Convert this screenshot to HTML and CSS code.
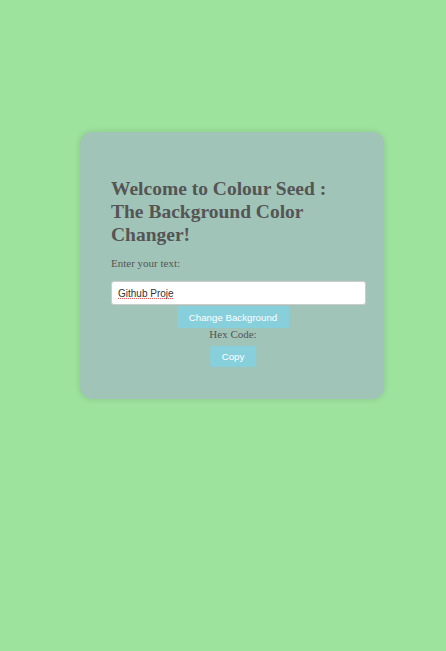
FILE: index.html
```html
<!DOCTYPE html>
<html>
<head>
<meta charset="utf-8">
<link rel="stylesheet" href="styles.css">
</head>
<body>
<div class="card">
  <h1 class="title">Welcome to Colour Seed : The Background Color Changer!</h1>
  <p class="label">Enter your text:</p>
  <input class="text-input" type="text" value="Github Proje" spellcheck="false">
  <div class="actions">
    <button class="btn">Change Background</button>
    <div class="hex">Hex Code:</div>
    <button class="btn btn-copy">Copy</button>
  </div>
</div>
</body>
</html>
```
FILE: styles.css
```css
html, body {
  margin: 0;
  padding: 0;
}
body {
  background: #9de29d;
  min-height: 651px;
  font-family: "Liberation Serif", serif;
  color: #555;
  padding-top: 132px;
  box-sizing: border-box;
}
.card {
  width: 304px;
  box-sizing: border-box;
  margin-left: 80px;
  background: #a0c4b8;
  border-radius: 12px;
  padding: 32px 18px 32px 31px;
  box-shadow: 0 0 6px rgba(0,0,0,0.12);
}
.title {
  font-size: 19.5px;
  font-weight: bold;
  line-height: 23px;
  margin: 13px 12px 11px 0;
  color: #555;
}
.label {
  font-size: 11px;
  line-height: 13px;
  margin: 0 0 11px;
}
.text-input {
  display: block;
  width: 100%;
  box-sizing: border-box;
  height: 24px;
  padding: 0 6px;
  border: 1px solid #ccc;
  border-radius: 3px;
  background: #fff;
  font-family: "Liberation Sans", sans-serif;
  font-size: 10px;
  color: #333;
  text-decoration: underline dotted #e06060;
  outline: none;
}
.actions {
  display: flex;
  flex-direction: column;
  align-items: center;
  margin-top: 1px;
  padding-right: 11px;
}
.btn {
  border: none;
  background: #88cfdc;
  color: #fff;
  font-family: "Liberation Sans", sans-serif;
  font-size: 9.7px;
  padding: 0 12px;
  height: 22px;
  border-radius: 2px;
}
.btn-copy {
  height: 21px;
}
.hex {
  font-size: 11px;
  margin: 0 0 5px;
  line-height: 13px;
}
```
